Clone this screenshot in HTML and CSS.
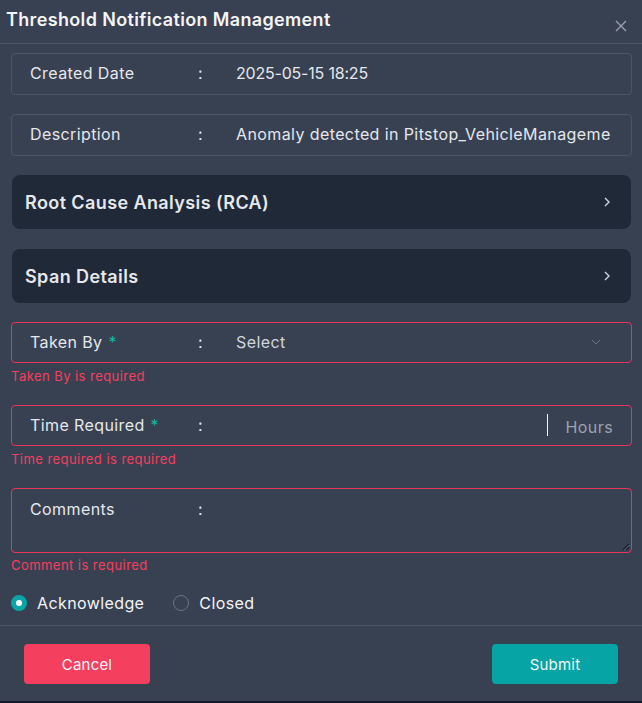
FILE: index.html
```html
<!DOCTYPE html>
<html lang="en">
<head>
    <meta charset="UTF-8">
    <meta name="viewport" content="width=device-width, initial-scale=1.0">
    <title>Threshold Notification Management</title>
    <link rel="stylesheet" href="styles.css">
</head>
<body>
    <div class="modal">
        <div class="modal-header">
            <h2>Threshold Notification Management</h2>
            <button class="close-btn" aria-label="Close">
                <svg width="12" height="12" viewBox="0 0 12 12"><path d="M1 1L11 11M11 1L1 11" stroke="#9ca3af" stroke-width="1.3" fill="none"/></svg>
            </button>
        </div>

        <div class="modal-body">
            <div class="info-row">
                <span class="row-label">Created Date</span>
                <span class="row-colon">:</span>
                <span class="row-value date">2025-05-15 18:25</span>
            </div>
            <div class="info-row">
                <span class="row-label">Description</span>
                <span class="row-colon">:</span>
                <span class="row-value clip">Anomaly detected in Pitstop_VehicleManageme</span>
            </div>

            <div class="accordion">
                <span>Root Cause Analysis (RCA)</span>
                <svg width="8" height="12" viewBox="0 0 8 12"><path d="M2 2L6 6L2 10" stroke="#d1d5db" stroke-width="1.4" fill="none"/></svg>
            </div>
            <div class="accordion last">
                <span>Span Details</span>
                <svg width="8" height="12" viewBox="0 0 8 12"><path d="M2 2L6 6L2 10" stroke="#d1d5db" stroke-width="1.4" fill="none"/></svg>
            </div>

            <div class="field invalid">
                <span class="row-label">Taken By <i class="req">*</i></span>
                <span class="row-colon">:</span>
                <span class="row-value placeholder">Select</span>
                <svg class="caret" width="10" height="6" viewBox="0 0 10 6"><path d="M1 1L5 5L9 1" stroke="#6b7280" stroke-width="1" fill="none"/></svg>
            </div>
            <p class="error">Taken By is required</p>

            <div class="field invalid">
                <span class="row-label">Time Required <i class="req">*</i></span>
                <span class="row-colon">:</span>
                <span class="row-value"></span>
                <span class="divider"></span>
                <span class="unit">Hours</span>
            </div>
            <p class="error">Time required is required</p>

            <div class="field textarea invalid">
                <span class="row-label">Comments</span>
                <span class="row-colon">:</span>
                <span class="row-value"></span>
                <svg class="grip" width="8" height="8" viewBox="0 0 8 8"><path d="M7 1L1 7M7 4L4 7" stroke="#111827" stroke-width="1.2" fill="none"/><path d="M7.5 2L2 7.5" stroke="#9ca3af" stroke-width="0.6"/></svg>
            </div>
            <p class="error last">Comment is required</p>

            <div class="radio-group">
                <label class="radio checked"><span class="dot"></span>Acknowledge</label>
                <label class="radio"><span class="dot"></span>Closed</label>
            </div>
        </div>

        <div class="modal-footer">
            <button class="btn btn-cancel">Cancel</button>
            <button class="btn btn-submit">Submit</button>
        </div>
    </div>
</body>
</html>
```

FILE: styles.css
```css
body {
    margin: 0;
    padding: 0;
    background: #384152;
    font-family: "Inter", "Open Sans", sans-serif;
    color: #e5e7eb;
}

.modal {
    width: 642px;
    height: 703px;
    background: #384152;
    display: flex;
    flex-direction: column;
    border-bottom: 2px solid #111827;
    box-sizing: border-box;
}

.modal-header {
    height: 43px;
    border-bottom: 1px solid #4b5565;
    display: flex;
    align-items: flex-start;
}
.modal-header h2 {
    margin: 0;
    padding: 9px 0 0 6px;
    font-size: 18px;
    font-weight: 600;
    color: #f3f4f6;
    letter-spacing: 0.35px;
}
.close-btn {
    margin-left: auto;
    margin-top: 20px;
    margin-right: 15px;
    background: none;
    border: none;
    padding: 0;
    width: 12px;
    height: 12px;
    display: flex;
}

.modal-body {
    padding: 9px 10px 0 11px;
    display: flex;
    flex-direction: column;
    flex: 1;
}

.info-row,
.field {
    display: flex;
    align-items: center;
    height: 42px;
    box-sizing: border-box;
    padding-left: 18px;
    padding-right: 18px;
    border: 1px solid #4b5565;
    border-radius: 4px;
    font-size: 16px;
    letter-spacing: 0.4px;
    margin-bottom: 19px;
    padding-bottom: 2px;
}
.row-label {
    width: 168px;
    flex-shrink: 0;
    color: #e5e7eb;
}
.row-colon {
    width: 38px;
    flex-shrink: 0;
}
.row-value {
    flex: 1;
    white-space: nowrap;
    overflow: hidden;
    color: #e5e7eb;
}
.row-value.date {
    letter-spacing: -0.2px;
}
.row-value.clip {
    margin-right: -12px;
}
.placeholder {
    color: #d1d5db;
}

.accordion {
    height: 54px;
    background: #1f2937;
    border-radius: 8px;
    display: flex;
    align-items: center;
    justify-content: space-between;
    padding: 0 20px 0 13px;
    margin: 0 1px 20px 1px;
    font-size: 18px;
    font-weight: 600;
    letter-spacing: 0.4px;
    color: #e5e7eb;
}
.accordion.last {
    margin-bottom: 19px;
}

.field.invalid {
    border-color: #e8365a;
    margin-bottom: 0;
    height: 41px;
}
.req {
    font-style: normal;
    color: #14b8a6;
    margin-left: 1px;
}
.caret {
    margin-right: 12px;
}
.divider {
    width: 1px;
    height: 22px;
    background: #f3f4f6;
    margin-right: 18px;
}
.unit {
    color: #9ca3af;
    margin-top: 4px;
}

.field.textarea {
    height: 65px;
    align-items: flex-start;
    padding-top: 10px;
    position: relative;
}
.grip {
    position: absolute;
    right: 1px;
    bottom: 1px;
}

.error {
    margin: 5px 0 21px 0;
    font-size: 13px;
    line-height: 16px;
    letter-spacing: 0.45px;
    color: #f43f5e;
}
.error.last {
    margin-top: 4px;
    margin-bottom: 20px;
}

.radio-group {
    display: flex;
    gap: 29px;
    font-size: 16px;
    letter-spacing: 0.4px;
}
.radio {
    display: flex;
    align-items: center;
    gap: 10px;
    color: #f3f4f6;
}
.dot {
    width: 16px;
    height: 16px;
    border-radius: 50%;
    border: 1px solid #6b7280;
    box-sizing: border-box;
}
.radio.checked .dot {
    border: 5px solid #0aa5a5;
    background: #fff;
}

.modal-footer {
    border-top: 1px solid #4b5565;
    padding: 18px 24px 17px 24px;
    display: flex;
    justify-content: space-between;
}
.btn {
    width: 126px;
    height: 40px;
    border: none;
    border-radius: 4px;
    color: #f3f4f6;
    font-family: inherit;
    font-size: 15px;
    letter-spacing: 0.2px;
    cursor: pointer;
}
.btn-cancel {
    background: #f43f5e;
}
.btn-submit {
    background: #06a4a4;
}
```
